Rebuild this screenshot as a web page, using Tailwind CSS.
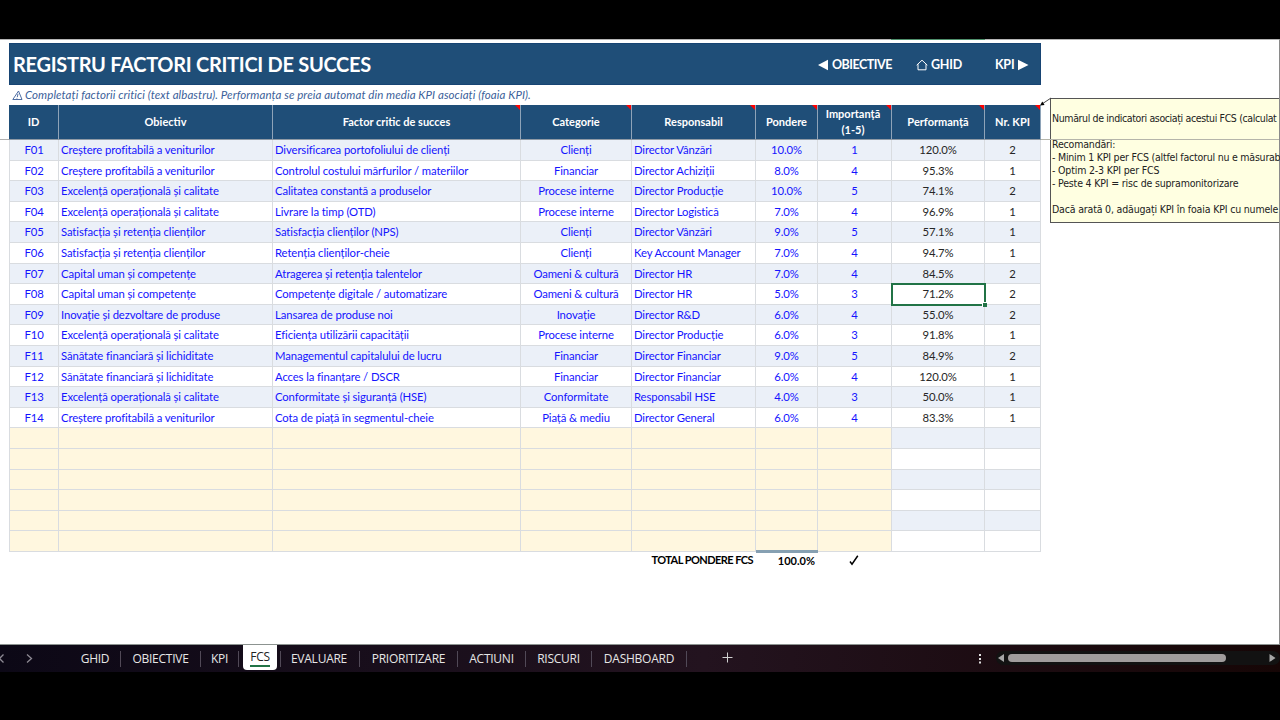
<!DOCTYPE html>
<html lang="ro">
<head>
    <meta charset="UTF-8">
    <meta name="viewport" content="width=device-width, initial-scale=1.0">
    <title>Registru factori critici de succes</title>
    <script src="https://cdn.jsdelivr.net/npm/@tailwindcss/browser@4"></script>
</head>
<body class="bg-black">
<div class="w-[1280px] h-[720px] bg-black pt-[39px] overflow-hidden flex flex-col font-['Lato','Open_Sans',sans-serif]">

    <!-- Worksheet -->
    <main class="relative h-[605px] bg-white border-t border-[#b4b4b4] border-r border-r-[#8a8a8a] pl-[9px] pt-[3px] shrink-0">

        <!-- Title bar -->
        <header class="w-[1032px] h-[42px] bg-[#1f4e78] border border-[#174473] text-white flex items-center pl-[3px]">
            <h1 class="text-[20px] leading-none font-bold tracking-[-0.3px] w-[805px] whitespace-nowrap">REGISTRU FACTORI CRITICI DE SUCCES</h1>
            <nav class="flex items-center pt-[2px] text-[12.5px] font-bold tracking-[-0.5px] whitespace-nowrap">
                <a class="flex items-center w-[98px]"><svg class="w-[11px] h-[12px] mr-[3px]" viewBox="0 0 11 12" fill="currentColor"><path d="M0 6 10 .8v10.4z"/></svg>OBIECTIVE</a>
                <a class="flex items-center w-[79px] tracking-[-0.2px]"><svg class="w-[12px] h-[12px] mr-[3px]" viewBox="0 0 12 12" fill="none" stroke="currentColor"><path d="M.7 6.2 6 1.2l5.3 5M2 5.2v5.6h8V5.2"/></svg>GHID</a>
                <a class="flex items-center tracking-[-0.2px]">KPI<svg class="w-[11px] h-[12px] ml-1" viewBox="0 0 11 12" fill="currentColor"><path d="M0 .8 10.5 6 0 11.2z"/></svg></a>
            </nav>
        </header>

        <p class="h-[20px] flex items-center pl-[3px] text-[11.5px] italic text-[#3c5f9a] whitespace-nowrap">
            <svg class="w-[11px] h-[11px] mr-[2px]" viewBox="0 0 11 11" fill="none" stroke="currentColor" stroke-width=".9"><path d="M6.5 1 10 9.5H.8zM6 3.8 5.3 7M5 7.8l-.1.8"/></svg>
            <span class="tracking-[0.07px]">Completați factorii critici (text albastru). Performanța se preia automat din media KPI asociați (foaia KPI).</span>
        </p>

        <!-- Column headings -->
        <div class="w-[1032px] h-[35px] grid grid-cols-[50px_214px_248px_111px_124px_62px_74px_93px_56px] bg-[#1f4e78] text-white text-[11px] leading-[16px] font-bold text-center border-b border-[#8f9aa5]" id="head"></div>

        <!-- Register rows -->
        <div id="rows" class="w-[1032px] border-l border-[#d9dce0] text-[11.3px] tracking-[-0.11px]"></div>

        <!-- Total -->
        <div class="w-[1032px] h-[18px] grid grid-cols-[747px_62px_74px] text-[11px] font-bold text-black">
            <div class="text-right pr-[3px] leading-[16px] tracking-[-0.55px]">TOTAL PONDERE FCS</div>
            <div class="text-right pr-[3px] leading-[16px] border-t-3 border-[#86a0b2] -mt-[2px]">100.0%</div>
            <div class="flex justify-center items-center pr-[2px] pb-[2px]"><svg class="w-[10px] h-[11px]" viewBox="0 0 10 11" fill="none" stroke="currentColor" stroke-width="1.5"><path d="M1 6.5 3 9.2 8.8.8"/></svg></div>
        </div>

        <!-- Cell selection -->
        <div class="absolute left-[891px] top-[243px] w-[95px] h-[23px] border-2 border-[#217346]">
            <i class="absolute -right-[3px] -bottom-[3px] size-[5px] bg-[#217346] border-l border-t border-white"></i>
        </div>
        <div class="absolute left-[891px] -top-px w-[94px] h-px bg-[#4f8f6b]"></div>

        <!-- Cell note with its pointer -->
        <aside class="absolute left-[1050px] top-[58px] w-[229px] h-[125px] bg-[#ffffe1] border border-r-0 border-[#555] pl-[1px] pt-[13px] whitespace-pre font-['DejaVu_Sans_Condensed','DejaVu_Sans',sans-serif] text-[10.5px] leading-[13px] tracking-[-0.17px] text-[#222]"><span class="tracking-[-0.37px]">Numărul de indicatori asociați acestui FCS (calculat</span>

Recomandări:
<span class="tracking-[-0.22px]">- Minim 1 KPI per FCS (altfel factorul nu e măsurab</span>
- Optim 2-3 KPI per FCS
- Peste 4 KPI = risc de supramonitorizare

Dacă arată 0, adăugați KPI în foaia KPI cu numele</aside>
        <svg class="absolute left-[1038px] top-[56px] w-[14px] h-[12px]" viewBox="0 0 14 12"><path d="M13 2 4 8" stroke="#444"/><path d="M2 9.5 4.3 5.5 6.6 9z" fill="#000"/></svg>

        <!-- Freeze pane line -->
        <div class="absolute left-0 top-[99px] w-[9px] h-px bg-[#b0b0b0]"></div>
        <div class="absolute left-[1041px] top-[99px] w-[238px] h-px bg-[#b5b5aa]"></div>
    </main>

    <!-- Sheet tabs -->
    <footer class="h-[28px] shrink-0 border-t border-[#8c9390] bg-linear-to-r from-[#0c0816] via-[#23131f] via-55% to-[#160606] flex text-[#e6e6e6] font-['Open_Sans',sans-serif] text-[12px] tracking-[-0.25px]">
        <div class="w-[70px] flex items-center text-[#8e8a94]">
            <svg class="w-[36px] h-[12px]" viewBox="0 0 36 12" fill="none" stroke="currentColor" stroke-width="1.3"><path d="M3.5 1.5-.5 5.5l4 4M27 1.5l4.5 4-4.5 4"/></svg>
        </div>
        <nav class="flex items-center h-[27px] text-center whitespace-nowrap">
            <a class="w-[51px] h-4 leading-4 border-r border-[#514957]">GHID</a>
            <a class="w-[80px] h-4 leading-4 border-r border-[#514957]">OBIECTIVE</a>
            <a class="w-[38px] h-4 leading-4 border-r border-[#514957]">KPI</a>
            <a class="w-[34px] h-[25px] ml-[4px] mr-[3px] -mt-[3px] bg-white rounded-b text-[#222] leading-[23px] relative">FCS<i class="absolute left-[7px] top-[20px] w-[20px] h-[2px] bg-[#217346]"></i></a>
            <a class="w-[80px] h-4 leading-4 border-r border-l border-[#514957] pr-[2px]">EVALUARE</a>
            <a class="w-[98px] h-4 leading-4 border-r border-[#514957]">PRIORITIZARE</a>
            <a class="w-[68px] h-4 leading-4 border-r border-[#514957]">ACTIUNI</a>
            <a class="w-[66px] h-4 leading-4 border-r border-[#514957]">RISCURI</a>
            <a class="w-[95px] h-4 leading-4 border-r border-[#514957]">DASHBOARD</a>
        </nav>
        <svg class="w-[11px] h-[11px] ml-[35px] mt-[7px]" viewBox="0 0 11 11" stroke="#d0d0d0"><path d="M5.5.5v10M.5 5.5h10"/></svg>
        <svg class="w-[3px] h-[10px] ml-auto mt-[9px] mr-[14px]" viewBox="0 0 3 10" fill="#e0e0e0"><path d="M0 0h2v2H0zM0 4h2v2H0zM0 7.5h2v2H0z"/></svg>
        <div class="w-[284px] h-[14px] mt-[6px] rounded-full bg-[#121212] flex items-center">
            <svg class="w-[7px] h-[8px] ml-[2px] mr-[3px]" viewBox="0 0 7 8" fill="#a6a6a6"><path d="M0 4 6 0v8z"/></svg>
            <i class="w-[218px] h-[8px] rounded-full bg-[#a09c9c]"></i>
            <svg class="w-[7px] h-[8px] ml-auto mr-[4px]" viewBox="0 0 7 8" fill="#a6a6a6"><path d="M.5 0 6.5 4l-6 4z"/></svg>
        </div>
    </footer>
</div>

<script>
    const headings = ['ID', 'Obiectiv', 'Factor critic de succes', 'Categorie', 'Responsabil', 'Pondere', 'Importanță<br>(1-5)', 'Performanță', 'Nr. KPI'];
    const data = [
        ['F01', 'Creștere profitabilă a veniturilor', 'Diversificarea portofoliului de clienți', 'Clienți', 'Director Vânzări', '10.0%', 1, '120.0%', 2],
        ['F02', 'Creștere profitabilă a veniturilor', 'Controlul costului mărfurilor / materiilor', 'Financiar', 'Director Achiziții', '8.0%', 4, '95.3%', 1],
        ['F03', 'Excelență operațională și calitate', 'Calitatea constantă a produselor', 'Procese interne', 'Director Producție', '10.0%', 5, '74.1%', 2],
        ['F04', 'Excelență operațională și calitate', 'Livrare la timp (OTD)', 'Procese interne', 'Director Logistică', '7.0%', 4, '96.9%', 1],
        ['F05', 'Satisfacția și retenția clienților', 'Satisfacția clienților (NPS)', 'Clienți', 'Director Vânzări', '9.0%', 5, '57.1%', 1],
        ['F06', 'Satisfacția și retenția clienților', 'Retenția clienților-cheie', 'Clienți', 'Key Account Manager', '7.0%', 4, '94.7%', 1],
        ['F07', 'Capital uman și competențe', 'Atragerea și retenția talentelor', 'Oameni &amp; cultură', 'Director HR', '7.0%', 4, '84.5%', 2],
        ['F08', 'Capital uman și competențe', 'Competențe digitale / automatizare', 'Oameni &amp; cultură', 'Director HR', '5.0%', 3, '71.2%', 2],
        ['F09', 'Inovație și dezvoltare de produse', 'Lansarea de produse noi', 'Inovație', 'Director R&amp;D', '6.0%', 4, '55.0%', 2],
        ['F10', 'Excelență operațională și calitate', 'Eficiența utilizării capacității', 'Procese interne', 'Director Producție', '6.0%', 3, '91.8%', 1],
        ['F11', 'Sănătate financiară și lichiditate', 'Managementul capitalului de lucru', 'Financiar', 'Director Financiar', '9.0%', 5, '84.9%', 2],
        ['F12', 'Sănătate financiară și lichiditate', 'Acces la finanțare / DSCR', 'Financiar', 'Director Financiar', '6.0%', 4, '120.0%', 1],
        ['F13', 'Excelență operațională și calitate', 'Conformitate și siguranță (HSE)', 'Conformitate', 'Responsabil HSE', '4.0%', 3, '50.0%', 1],
        ['F14', 'Creștere profitabilă a veniturilor', 'Cota de piață în segmentul-cheie', 'Piață &amp; mediu', 'Director General', '6.0%', 4, '83.3%', 1],
    ];
    // six empty input rows under the register
    for (let i = 0; i < 6; i++) data.push(Array(9).fill(''));

    // columns from Factor critic on carry a note marker
    document.getElementById('head').innerHTML = headings.map((h, i) =>
        `<div class="relative flex items-center justify-center border-r border-[#8ea3b8] ${i === 6 ? 'pr-[3px]' : ''}">${h}${i > 1 ? '<svg class="absolute right-0 top-0 size-[5px]" viewBox="0 0 5 5"><path d="M0 0h5v5z" fill="#f00"/></svg>' : ''}</div>`
    ).join('');

    document.getElementById('rows').innerHTML = data.map((row, r) => {
        const empty = row[0] === '';
        const cells = row.map((v, c) => {
            const align = (c === 1 || c === 2 || c === 4) ? 'pl-[2px]' : 'text-center';
            const color = c > 6 ? 'text-[#262626]' : 'text-[#1414ff]';
            const fill = empty && c < 7 ? 'bg-[#fff7df]' : (r % 2 ? 'bg-white' : 'bg-[#ebf0f8]');
            return `<div class="border-r border-b border-[#d9dce0] whitespace-nowrap ${align} ${color} ${fill}">${v}</div>`;
        }).join('');
        // five rows take 103px, so heights alternate between 20 and 21
        const height = (r % 5 === 1 || r % 5 === 3) ? 'h-[20px] leading-[19px]' : 'h-[21px] leading-[20px]';
        return `<div class="${height} grid grid-rows-1 grid-cols-[49px_214px_248px_111px_124px_62px_74px_93px_56px]">${cells}</div>`;
    }).join('');
</script>
</body>
</html>
